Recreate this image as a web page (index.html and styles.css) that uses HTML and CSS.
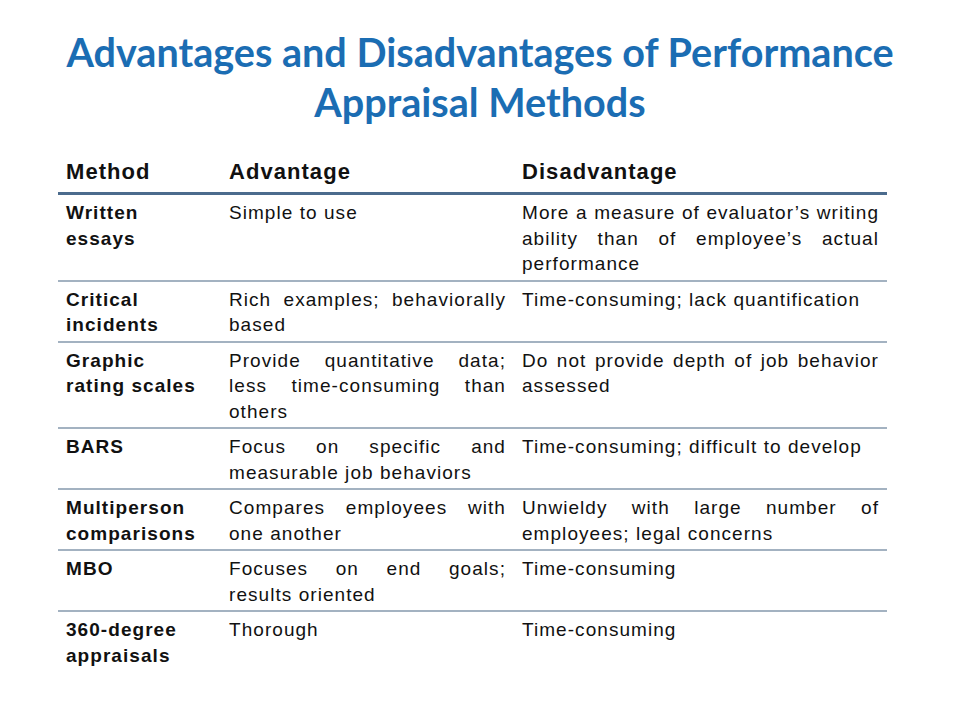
FILE: index.html
```html
<!DOCTYPE html>
<html>
<head>
<meta charset="utf-8">
<link rel="stylesheet" href="styles.css">
</head>
<body>
<h1 class="title">Advantages and Disadvantages of Performance<br>Appraisal Methods</h1>
<table class="grid">
  <thead>
    <tr>
      <th class="c1">Method</th>
      <th class="c2">Advantage</th>
      <th class="c3">Disadvantage</th>
    </tr>
  </thead>
  <tbody>
    <tr>
      <td class="c1 lab">Written essays</td>
      <td class="c2">Simple to use</td>
      <td class="c3">More a measure of evaluator’s writing ability than of employee’s actual performance</td>
    </tr>
    <tr>
      <td class="c1 lab">Critical incidents</td>
      <td class="c2">Rich examples; behaviorally based</td>
      <td class="c3">Time-consuming; lack quantification</td>
    </tr>
    <tr>
      <td class="c1 lab">Graphic rating scales</td>
      <td class="c2">Provide quantitative data; less time-consuming than others</td>
      <td class="c3">Do not provide depth of job behavior assessed</td>
    </tr>
    <tr>
      <td class="c1 lab">BARS</td>
      <td class="c2">Focus on specific and measurable job behaviors</td>
      <td class="c3">Time-consuming; difficult to develop</td>
    </tr>
    <tr>
      <td class="c1 lab">Multiperson comparisons</td>
      <td class="c2">Compares employees with one another</td>
      <td class="c3">Unwieldy with large number of employees; legal concerns</td>
    </tr>
    <tr>
      <td class="c1 lab">MBO</td>
      <td class="c2">Focuses on end goals; results oriented</td>
      <td class="c3">Time-consuming</td>
    </tr>
    <tr class="last">
      <td class="c1 lab">360-degree appraisals</td>
      <td class="c2">Thorough</td>
      <td class="c3">Time-consuming</td>
    </tr>
  </tbody>
</table>
</body>
</html>
```
FILE: styles.css
```css
html, body {
  margin: 0;
  padding: 0;
  background: #ffffff;
}
body {
  width: 960px;
  height: 720px;
  overflow: hidden;
  font-family: "Liberation Sans", Arial, sans-serif;
  color: #111111;
}
.title {
  margin: 0;
  padding-top: 27px;
  font-family: "Lato", "Open Sans", sans-serif;
  font-weight: 700;
  font-size: 39.6px;
  line-height: 50px;
  text-align: center;
  color: #1b6db3;
}
.grid {
  margin: 30px 0 0 58px;
  width: 829px;
  border-collapse: collapse;
  table-layout: fixed;
}
.grid th, .grid td {
  vertical-align: top;
  padding: 5px 8px 3px 8px;
}
.grid .c1 { width: 136px; padding-right: 19px; }
.grid .c2 { width: 277px; }
.grid .c3 { width: 357px; }
.grid th {
  text-align: left;
  font-size: 22px;
  font-weight: 700;
  letter-spacing: 1.05px;
  line-height: 25px;
  padding-top: 2px;
  padding-bottom: 8px;
  border-bottom: 3px solid #4b6b8d;
}
.grid td {
  font-size: 19px;
  letter-spacing: 1.05px;
  line-height: 25.5px;
  border-bottom: 2px solid #a3b2c1;
}
.grid td.c2, .grid td.c3 {
  text-align: justify;
}
.grid td.lab {
  font-weight: 700;
  text-align: left;
}
.grid tr.last td {
  border-bottom: none;
}
```
